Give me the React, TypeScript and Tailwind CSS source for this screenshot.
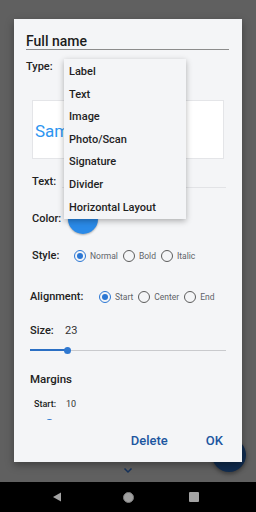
import React from "react";

const Radio = ({ on }: { on?: boolean }) => (
  <span
    className={
      "flex h-[12px] w-[12px] shrink-0 items-center justify-center rounded-full border-[1.5px] " +
      (on ? "border-[#2b77d4]" : "border-[#5c5c5c]")
    }
  >
    {on ? <span className="h-[6px] w-[6px] rounded-full bg-[#2b77d4]" /> : null}
  </span>
);

const Opt = ({ on, label, first }: { on?: boolean; label: string; first?: boolean }) => (
  <div className={"flex items-center gap-[4px] " + (first ? "" : "ml-[5px]")}>
    <Radio on={on} />
    <span className="text-[8.5px] leading-[12px] text-[#5f6368]">{label}</span>
  </div>
);

const menuItems = ["Label", "Text", "Image", "Photo/Scan", "Signature", "Divider", "Horizontal Layout"];

export default function App() {
  return (
    <div
      className="relative flex h-[512px] w-[256px] flex-col overflow-hidden bg-[#606060]"
      style={{ fontFamily: "Roboto, 'Liberation Sans', sans-serif" }}
    >
      <div className="relative h-[482px] w-full shrink-0">
        {/* FAB behind dialog */}
        <div className="absolute left-[212px] top-[438px] h-[34px] w-[34px] rounded-full bg-[#112c4f] shadow-[0_2px_4px_rgba(0,0,0,0.4)]" />
        {/* chevron */}
        <svg className="absolute left-[123px] top-[467px]" width="10" height="7" viewBox="0 0 10 7">
          <path d="M1.5 1.5 L5 5 L8.5 1.5" fill="none" stroke="#16335c" strokeWidth="1.5" />
        </svg>

        {/* dialog */}
        <div className="absolute left-[14px] top-[19px] flex h-[443px] w-[228px] flex-col bg-[#f4f5f7] shadow-[0_3px_8px_rgba(0,0,0,0.35)]">
          <div className="h-[401px] shrink-0 overflow-hidden">
            <div className="ml-[12px] mr-[13px] mt-[15px] h-[16px] border-b border-[#8c8c8c]">
              <span className="block text-[14px] font-medium leading-[15px] text-[#1c1c1c]">Full name</span>
            </div>
            <div className="ml-[12px] flex h-[35px] items-center text-[11px] font-medium text-[#222]">Type:</div>

            <div className="ml-[18px] mt-[15px] h-[59px] w-[192px] border border-[#e4e5e8] bg-white pl-[2px] pt-[20px]">
              <span className="block text-[17px] leading-[20px] text-[#2d95f0]">Sam</span>
            </div>

            <div className="ml-[18px] mr-[16px] mt-[12px] flex h-[22px] items-start">
              <span className="w-[30px] text-[11px] font-medium leading-[22px] text-[#222]">Text:</span>
              <div className="h-[17px] flex-1 border-b border-[#e2e3e6]" />
            </div>

            <div className="ml-[18px] mt-[11px] flex h-[30px] items-center">
              <span className="w-[36px] text-[11px] font-medium text-[#222]">Color:</span>
              <div className="h-[30px] w-[30px] rounded-full bg-[#2a8ae8] shadow-[0_1px_2px_rgba(0,0,0,0.3)]" />
            </div>

            <div className="ml-[18px] mt-[12px] flex h-[20px] items-center">
              <span className="w-[42px] text-[11px] font-medium text-[#222]">Style:</span>
              <Opt on first label="Normal" />
              <Opt label="Bold" />
              <Opt label="Italic" />
            </div>

            <div className="ml-[16px] mt-[21px] flex h-[20px] items-center">
              <span className="w-[69px] text-[11px] font-medium text-[#222]">Alignment:</span>
              <Opt on first label="Start" />
              <Opt label="Center" />
              <Opt label="End" />
            </div>

            <div className="ml-[16px] mt-[14px] flex h-[20px] items-center text-[11px]">
              <span className="w-[35px] font-medium text-[#222]">Size:</span>
              <span className="text-[#333]">23</span>
            </div>

            <div className="relative ml-[16px] mt-[4px] h-[10px] w-[196px]">
              <div className="absolute left-0 right-0 top-[4.5px] h-[1px] bg-[#c9cacd]" />
              <div className="absolute left-0 top-[4px] h-[2px] w-[37px] bg-[#2b6fc4]" />
              <div className="absolute left-[33.5px] top-[1.5px] h-[7px] w-[7px] rounded-full bg-[#2f78d0]" />
            </div>

            <div className="ml-[16px] mt-[15px] flex h-[20px] items-center text-[11.5px] font-medium text-[#222]">
              Margins
            </div>

            <div className="ml-[20px] mt-[8px] flex h-[14px] items-center text-[9px]">
              <span className="w-[32px] font-medium text-[#222]">Start:</span>
              <span className="text-[#333]">10</span>
            </div>

            <div className="relative ml-[20px] mt-[5px] h-[10px] w-[188px]">
              <div className="absolute left-0 top-[4px] h-[2px] w-[15px] bg-[#2b6fc4]" />
              <div className="absolute left-[11.5px] top-[1.5px] h-[7px] w-[7px] rounded-full bg-[#2f78d0]" />
            </div>
          </div>

          <div className="flex h-[42px] shrink-0 items-center justify-end gap-[38px] pr-[19px] text-[13px] font-medium text-[#1c56a0]">
            <span>Delete</span>
            <span>OK</span>
          </div>
        </div>

        {/* dropdown menu */}
        <div className="absolute left-[64px] top-[59px] w-[122px] bg-[#f4f5f7] pt-[2px] shadow-[0_2px_6px_rgba(0,0,0,0.3)]">
          {menuItems.map((m) => (
            <div key={m} className="flex h-[22.6px] items-center pl-[5px] text-[11px] font-medium text-[#1f1f1f]">
              {m}
            </div>
          ))}
        </div>
      </div>

      {/* nav bar */}
      <div className="flex h-[30px] w-full shrink-0 items-center bg-black">
        <svg className="ml-[52px]" width="10" height="10" viewBox="0 0 10 10">
          <path d="M9 0.5 L9 9.5 L1 5 Z" fill="#a3a3a3" />
        </svg>
        <div className="ml-[61px] h-[11px] w-[11px] rounded-full border border-[#7a7a7a] bg-[#a0a0a0]" />
        <div className="ml-[55px] h-[10px] w-[10px] rounded-[1px] bg-[#a3a3a3]" />
      </div>
    </div>
  );
}
